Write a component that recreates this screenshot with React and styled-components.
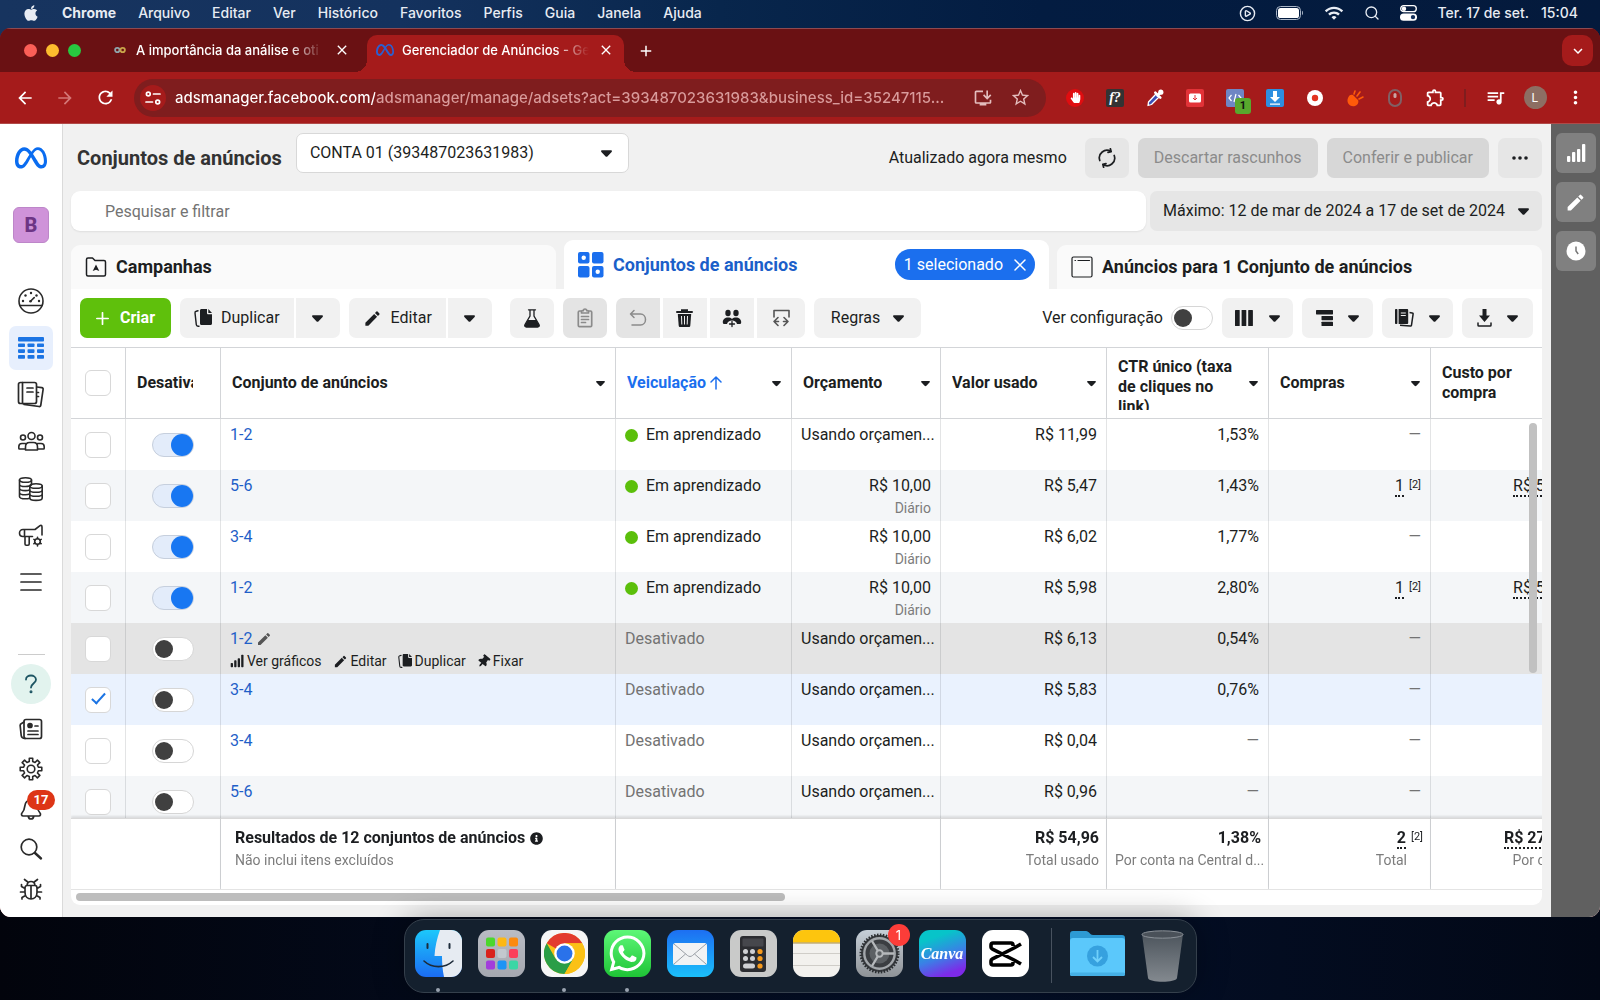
import React from "react";
import styled, { createGlobalStyle, css } from "styled-components";
import { FaApple, FaHandPaper, FaWhatsapp, FaThumbtack, FaInfoCircle } from "react-icons/fa";
import { FaMeta } from "react-icons/fa6";
import {
  MdArrowBack, MdArrowForward, MdRefresh, MdStarBorder, MdOutlineInstallDesktop,
  MdOutlineExtension, MdQueueMusic, MdMoreVert, MdClose, MdAdd, MdExpandMore, MdModeEdit, MdWifi,
} from "react-icons/md";
import { Search, CirclePlay } from "lucide-react";

const UI = 'Roboto, "Liberation Sans", sans-serif';
const SYSTEM = 'Inter, "Liberation Sans", sans-serif';
const INK = "#1c1e21";
const BLUE = "#1b74e4";
const LINE = "#d3d5d8";

const GlobalStyle = createGlobalStyle`
  *, *::before, *::after { box-sizing: border-box; }
  body { margin: 0; background: #050b1a; }
  button, input, select { font: inherit; color: inherit; margin: 0; }
  button { border: 0; padding: 0; background: none; cursor: pointer; }
  svg { display: block; flex: none; }
`;

/* ---------- desktop ---------- */
const Desktop = styled.div`
  height: 100vh;
  display: flex;
  flex-direction: column;
  overflow: hidden;
  background: linear-gradient(90deg, #17345f 0, #14325e 25%, #08264c 45%, #031c41 65%, #041a3c 100%) 0 0 / 100% 60px no-repeat,
    linear-gradient(90deg, #02040c, #04102a 60%, #020816);
`;
const MenuBar = styled.header`
  height: 28px;
  padding: 0 22px 2px;
  display: flex;
  align-items: center;
  justify-content: space-between;
  font: 500 14px/26px ${SYSTEM};
  color: #e8ecf3;
`;
const MenuGroup = styled.nav`
  display: flex;
  align-items: center;
  gap: 22px;
`;
const MenuItem = styled.button`
  font-weight: ${(p) => (p.$strong ? 700 : 500)};
`;
const StatusGroup = styled.div`
  display: flex;
  align-items: center;
  gap: 20px;
`;
const Clock = styled.time`
  display: flex;
  gap: 12px;
`;

/* ---------- browser ---------- */
const BrowserWindow = styled.div`
  flex: 1;
  min-height: 0;
  display: flex;
  flex-direction: column;
  border-radius: 11px;
  overflow: hidden;
  background: #a51b1b;
  font-family: ${SYSTEM};
  color: #fff;
`;
const TabStrip = styled.div`
  height: 44px;
  padding: 0 7px 0 24px;
  display: flex;
  align-items: center;
  background: #6a1113;
  border-top: 1px solid #8d4a50;
`;
const Lights = styled.div`
  display: flex;
  gap: 9px;
  margin-right: 23px;
`;
const Light = styled.span`
  width: 13px;
  height: 13px;
  border-radius: 50%;
  background: ${(p) => p.$color};
`;
const BrowserTab = styled.div`
  position: relative;
  width: 263px;
  height: 37px;
  align-self: flex-end;
  padding: 0 16px 7px 10px;
  display: flex;
  align-items: center;
  gap: 10px;
  font-size: 13px;
  font-weight: 500;
  ${(p) => p.$active && css`
    width: 257px;
    padding: 0 9px 7px;
    gap: 8px;
    border-radius: 10px 10px 0 0;
    background: #a51b1b;
    &::before, &::after {
      content: "";
      position: absolute;
      bottom: 0;
      width: 12px;
      height: 12px;
    }
    &::before { left: -12px; background: radial-gradient(circle at 0 0, transparent 12px, #a51b1b 12px); }
    &::after { right: -12px; background: radial-gradient(circle at 100% 0, transparent 12px, #a51b1b 12px); }
  `}
`;
const TabTitle = styled.span`
  flex: 1;
  min-width: 0;
  overflow: hidden;
  white-space: nowrap;
  mask-image: linear-gradient(90deg, #000 calc(100% - 34px), transparent);
`;
const IconButton = styled.button`
  width: ${(p) => p.$w || 18}px;
  height: ${(p) => p.$h || p.$w || 18}px;
  display: grid;
  place-items: center;
  border-radius: 10px;
  background: ${(p) => p.$bg || "none"};
  color: ${(p) => p.$fg || "#fff"};
  flex: none;
`;
const Spacer = styled.div`flex: 1;`;
const AddressRow = styled.div`
  height: 52px;
  padding: 0 5px;
  display: flex;
  align-items: center;
  border-bottom: 1px solid #b04a48;
`;
const Omnibox = styled.label`
  flex: 1;
  height: 38px;
  margin: 0 9px 0 9px;
  padding: 0 13px 0 6px;
  display: flex;
  align-items: center;
  gap: 9px;
  border-radius: 19px;
  background: #7f1d1e;
`;
const SiteInfo = styled.span`
  width: 26px;
  height: 26px;
  flex: none;
  display: grid;
  place-items: center;
  border-radius: 50%;
  background: #a51b1b;
`;
const AddressInput = styled.input`
  flex: 1;
  min-width: 0;
  border: 0;
  padding: 0;
  outline: 0;
  font-size: 15px;
  font-weight: 500;
  color: #fff;
  background: linear-gradient(90deg, #fff 200px, #d99b9b 200px);
  -webkit-background-clip: text;
  background-clip: text;
  -webkit-text-fill-color: transparent;
`;
const Extensions = styled.div`display: flex; align-items: center;`;
const BarDivider = styled.span`
  width: 2px;
  height: 18px;
  margin: 0 9px;
  background: #7f1d1e;
`;
const Avatar = styled.span`
  width: 23px;
  height: 23px;
  border-radius: 50%;
  background: #8d6e63;
  font-size: 12px;
  line-height: 23px;
  text-align: center;
`;

/* ---------- page ---------- */
const Page = styled.div`
  flex: 1;
  min-height: 0;
  display: flex;
  background: #f1f1f1;
  color: ${INK};
  font: 400 16px/20px ${UI};
`;
const SideNav = styled.nav`
  width: 63px;
  padding: 12px 0 8px;
  display: flex;
  flex-direction: column;
  align-items: center;
  background: #fff;
  border-right: 1px solid #dadada;
`;
const SideItem = styled.button`
  position: relative;
  width: 44px;
  height: ${(p) => (p.$small ? 40 : 44)}px;
  flex: none;
  margin-bottom: ${(p) => (p.$small ? 0 : 3)}px;
  display: grid;
  place-items: center;
  border-radius: 7px;
  background: ${(p) => (p.$active ? "#e7effd" : "none")};
  color: ${(p) => (p.$active ? BLUE : "#2a2a2a")};
`;
const BusinessBadge = styled.button`
  width: 36px;
  height: 36px;
  flex: none;
  margin: 24px 0 36px;
  border: 1px solid #bd86c9;
  border-radius: 6px;
  background: #cf93d9;
  color: #6d3585;
  font-size: 20px;
  font-weight: 800;
`;
const SideRule = styled.hr`
  width: 27px;
  margin: auto 0 9px;
  border: 0;
  border-top: 1px solid #ccc;
`;
const HelpButton = styled.button`
  width: 40px;
  height: 40px;
  flex: none;
  margin-bottom: 5px;
  display: grid;
  place-items: center;
  border-radius: 50%;
  background: #e2f3ee;
  color: #1d5563;
`;
const CountBadge = styled.span`
  position: absolute;
  top: 1px;
  left: 18px;
  width: 28px;
  height: 20px;
  border-radius: 10px;
  background: #dd3516;
  color: #fff;
  font-size: 13px;
  font-weight: 700;
  line-height: 20px;
  text-align: center;
`;
const Content = styled.main`
  flex: 1;
  min-width: 0;
  padding: 9px 9px 12px 8px;
  display: flex;
  flex-direction: column;
`;
const PageHeader = styled.div`
  min-height: 50px;
  display: flex;
  align-items: center;
  gap: 9px;
`;
const Title = styled.h1`
  margin: 0 5px 0 6px;
  font-size: 20px;
  line-height: 24px;
  font-weight: 700;
  color: #333;
`;
const AccountPicker = styled.label`
  width: 333px;
  height: 40px;
  align-self: flex-start;
  display: grid;
  align-items: center;
  grid-template-columns: 1fr;
  & > * { grid-area: 1 / 1; }
  & > svg { justify-self: end; margin-right: 17px; pointer-events: none; }
`;
const AccountSelect = styled.select`
  width: 100%;
  height: 40px;
  padding: 0 40px 0 13px;
  appearance: none;
  border: 1px solid #d8d8d8;
  border-radius: 7px;
  background: #fff;
`;
const Updated = styled.span`margin-right: 9px;`;
const Button = styled.button`
  height: 40px;
  min-width: 44px;
  padding: 0 ${(p) => p.$pad || 0}px;
  display: flex;
  align-items: center;
  justify-content: center;
  gap: ${(p) => p.$gap || 9}px;
  border-radius: 7px;
  white-space: nowrap;
  background: ${(p) => p.$bg || "#f1f1f1"};
  color: ${(p) => p.$fg || INK};
  font-weight: ${(p) => (p.$strong ? 700 : 400)};
`;
const SearchRow = styled.div`
  margin: 8px 0 9px;
  display: flex;
  gap: 4px;
`;
const SearchInput = styled.input`
  flex: 1;
  height: 40px;
  padding: 0 34px;
  border: 0;
  border-radius: 9px;
  background: #fff;
  box-shadow: 0 1px 2px rgba(0, 0, 0, 0.08);
  &::placeholder { color: #737373; opacity: 1; }
`;
const LevelTabs = styled.div`
  display: grid;
  grid-template-columns: repeat(3, 1fr);
  column-gap: 8px;
  align-items: end;
`;
const LevelTab = styled.div`
  height: ${(p) => (p.$active ? 49 : 44)}px;
  padding: 0 14px;
  display: flex;
  align-items: center;
  justify-content: space-between;
  border-radius: 9px 9px 0 0;
  background: ${(p) => (p.$active ? "#fff" : "#fafafa")};
  color: ${(p) => (p.$active ? "#1b5fc9" : INK)};
`;
const LevelButton = styled.button`
  display: flex;
  align-items: center;
  gap: 9px;
  font-size: 18px;
  font-weight: 700;
`;
const SelectedPill = styled.button`
  height: 31px;
  padding: 0 9px;
  display: flex;
  align-items: center;
  gap: 11px;
  border-radius: 16px;
  background: #1b6fee;
  color: #fff;
`;
const Panel = styled.section`
  flex: 1;
  min-height: 0;
  display: flex;
  flex-direction: column;
  background: #fff;
  border-radius: 0 0 9px 9px;
`;
const Toolbar = styled.div`
  height: 58px;
  padding: 0 9px;
  flex: none;
  display: flex;
  align-items: center;
  gap: 9px;
`;
const ButtonGroup = styled.div`
  display: flex;
  gap: ${(p) => p.$gap || 2}px;
  & > button:not(:first-child) { border-top-left-radius: 0; border-bottom-left-radius: 0; }
  & > button:not(:last-child) { border-top-right-radius: 0; border-bottom-right-radius: 0; }
`;
const Flask = styled(Button)`margin-left: 9px;`;
const ConfigLabel = styled.label`
  display: flex;
  align-items: center;
  gap: 8px;
`;

/* ---------- controls ---------- */
const Switch = styled.input.attrs({ type: "checkbox", role: "switch" })`
  appearance: none;
  width: 42px;
  height: 24px;
  padding: 0 2px;
  display: inline-flex;
  align-items: center;
  vertical-align: middle;
  border: 1px solid #d6d6d6;
  border-radius: 12px;
  background: #fff;
  &::before {
    content: "";
    width: 18px;
    height: 18px;
    border-radius: 50%;
    background: #404040;
  }
  &:checked {
    padding: 0;
    justify-content: flex-end;
    background: #e3ecfa;
    border-color: #c6cfdd;
  }
  &:checked::before {
    width: 22px;
    height: 22px;
    background: #1877f2;
  }
`;
const Tick = styled.input.attrs({ type: "checkbox" })`
  appearance: none;
  width: 26px;
  height: 26px;
  display: inline-grid;
  place-items: center;
  vertical-align: middle;
  border: 1px solid #d8d8d8;
  border-radius: 6px;
  background: #fff;
  &:checked::before {
    content: "";
    width: 7px;
    height: 14px;
    margin-bottom: 5px;
    border: solid ${BLUE};
    border-width: 0 2px 2px 0;
    transform: rotate(42deg);
  }
`;

/* ---------- table ---------- */
const TableArea = styled.div`
  position: relative;
  flex: 1;
  min-height: 0;
  overflow: hidden;
  border-top: 1px solid ${LINE};
  border-bottom: 1px solid #e4e4e4;
`;
const Table = styled.table`
  width: 1522px;
  table-layout: fixed;
  border-collapse: separate;
  border-spacing: 0;
`;
const HeadCell = styled.th`
  position: sticky;
  top: 0;
  z-index: 1;
  height: 71px;
  padding: ${(p) => (p.$center ? "0" : "0 10px 0 11px")};
  text-align: ${(p) => (p.$center ? "center" : "left")};
  border-right: 1px solid ${LINE};
  border-bottom: 1px solid ${LINE};
  background: #fff;
`;
const HeadInner = styled.div`
  display: flex;
  align-items: center;
  justify-content: space-between;
`;
const HeadText = styled.button`
  max-width: ${(p) => p.$max || "none"};
  max-height: 53px;
  overflow: hidden;
  display: flex;
  align-items: ${(p) => (p.$sorted ? "center" : "flex-start")};
  gap: 3px;
  text-align: left;
  font-weight: 700;
  white-space: ${(p) => (p.$wrap ? "normal" : "nowrap")};
  color: ${(p) => (p.$sorted ? "#1b6fee" : "inherit")};
`;
const Row = styled.tr`
  background: ${(p) => ({ plain: "#fff", alt: "#f4f6f8", hover: "#e4e4e4", picked: "#eaf2fe" })[p.$tone]};
`;
const Cell = styled.td`
  height: 51px;
  padding: ${(p) => (p.$middle ? "0" : "6px 9px 0")};
  vertical-align: ${(p) => (p.$middle ? "middle" : "top")};
  text-align: ${(p) => (p.$middle ? "center" : p.$right ? "right" : "left")};
  border-right: 1px solid rgba(60, 64, 70, 0.14);
  white-space: nowrap;
`;
const FootCell = styled.td`
  position: sticky;
  bottom: 0;
  height: 71px;
  padding: 9px 7px 0 ${(p) => (p.$name ? 14 : 8)}px;
  vertical-align: top;
  text-align: ${(p) => (p.$right ? "right" : "left")};
  border-top: 1px solid #d9d9d9;
  border-right: 1px solid ${LINE};
  background: #fff;
  box-shadow: 0 -2px 2px rgba(0, 0, 0, 0.1);
  white-space: nowrap;
  font-weight: 700;
`;
const NameLink = styled.a`
  color: #1f5fc8;
  text-decoration: none;
`;
const NameLine = styled.div`display: flex; align-items: center; gap: 4px; color: #555;`;
const RowActions = styled.div`
  margin-top: 2px;
  display: flex;
  gap: 11px;
  font-size: 14px;
  line-height: 20px;
`;
const RowAction = styled.button`display: flex; align-items: center; gap: 3px;`;
const TiltedPin = styled(FaThumbtack)`transform: rotate(40deg);`;
const Delivery = styled.span`
  display: flex;
  align-items: center;
  gap: 8px;
  color: ${(p) => (p.$off ? "#737373" : "inherit")};
`;
const Dot = styled.span`
  width: 13px;
  height: 13px;
  border-radius: 50%;
  background: #5bbf0b;
`;
const Sub = styled.div`
  margin-top: 3px;
  font-size: 14px;
  line-height: 18px;
  font-weight: 400;
  color: #7c7c7c;
  padding-right: ${(p) => p.$inset || 0}px;
`;
const Dash = styled.span`color: #737373;`;
const Dotted = styled.span`border-bottom: 2px dotted currentColor;`;
const Note = styled.sup`
  margin-left: 5px;
  font-size: 11px;
  line-height: 10px;
  font-weight: 400;
  vertical-align: 3px;
`;
const FootTitle = styled.div`display: flex; align-items: center; gap: 5px;`;
const VerticalThumb = styled.div`
  position: absolute;
  top: 75px;
  right: 5px;
  z-index: 2;
  width: 8px;
  height: 250px;
  border-radius: 4px;
  background: #c1c1c1;
`;
const ScrollTrack = styled.div`
  height: 15px;
  flex: none;
  padding: 3px 5px;
`;
const HorizontalThumb = styled.div`
  width: 48.5%;
  height: 8px;
  border-radius: 4px;
  background: #bdbdbd;
`;

/* ---------- right rail ---------- */
const Rail = styled.aside`
  width: 49px;
  padding-top: 9px;
  display: flex;
  flex-direction: column;
  align-items: center;
  gap: 9px;
  background: #606060;
`;
const RailButton = styled.button`
  width: 40px;
  height: 40px;
  display: grid;
  place-items: center;
  border-radius: 6px;
  background: #808080;
  color: #fff;
`;

/* ---------- dock ---------- */
const DockArea = styled.footer`
  position: relative;
  height: 83px;
  padding-top: 2px;
  flex: none;
  display: flex;
  justify-content: center;
  align-items: flex-start;
`;
const DockShelf = styled.div`
  height: 74px;
  padding: 10px 12px 0 10px;
  display: flex;
  align-items: flex-start;
  gap: 16px;
  border: 1px solid #35404c;
  border-radius: 20px;
  background: #14202e;
  box-shadow: 0 0 32px rgba(0, 0, 0, 0.32);
`;
const DockApp = styled.button`
  position: relative;
  width: 47px;
  height: 63px;
  font-family: ${SYSTEM};
  &::after {
    content: "";
    position: absolute;
    left: 21px;
    bottom: 1px;
    width: 4px;
    height: 4px;
    border-radius: 50%;
    background: ${(p) => (p.$running ? "#9aa3b0" : "transparent")};
  }
`;
const DockTile = styled.span`
  width: 47px;
  height: 47px;
  margin-bottom: 16px;
  display: grid;
  place-items: center;
  overflow: hidden;
  border-radius: 11px;
  background: ${(p) => p.$bg};
  color: #fff;
`;
const DockBadge = styled.span`
  position: absolute;
  top: -6px;
  right: -7px;
  width: 22px;
  height: 22px;
  border-radius: 50%;
  background: #fc3d39;
  color: #fff;
  font-size: 13px;
  line-height: 22px;
`;
const CanvaWord = styled.span`
  font: italic 700 16px/20px "Liberation Serif", serif;
`;
const DockRule = styled.span`
  width: 1px;
  height: 55px;
  margin: -2px 2px 0 6px;
  background: #48525f;
`;

/* ---------- drawings ---------- */
const Caret = ({ w = 11 }) => (
  <svg width={w} height={w} viewBox="0 -2.500 12 12"><path d="M1.2 0h9.6c1 0 1.5 1 .8 1.8L7.200 6.400c-.7.8-1.700.8-2.400 0L.4 1.800C-.3 1 .2 0 1.2 0z" fill="currentColor" /></svg>
);
const Stroke = ({ size = 26, sw = 1.6, children, box = 26 }) => (
  <svg width={size} height={size} viewBox={`0 0 ${box} ${box}`} fill="none" stroke="currentColor" strokeWidth={sw} strokeLinecap="round" strokeLinejoin="round">{children}</svg>
);
const PlusIcon = () => (<Stroke size={13} box={13} sw={1.7}><path d="M6.500.8v11.400M.8 6.500h11.400" /></Stroke>);
const GaugeIcon = () => (
  <Stroke><circle cx="13" cy="13" r="12" /><path d="M2 17.5h22M13 12.8l3.2-3.2" />
    <g fill="currentColor" stroke="none"><circle cx="5" cy="13" r="1.2" /><circle cx="7.5" cy="7.5" r="1.2" /><circle cx="13" cy="5" r="1.2" /><circle cx="18.5" cy="7.5" r="1.2" /><circle cx="21" cy="13" r="1.2" /><circle cx="12.5" cy="13.3" r="1.3" /></g></Stroke>
);
const GridIcon = () => (
  <svg width="26" height="22" viewBox="0 0 26 22" fill="currentColor">
    <rect width="26" height="4.5" rx="1" />
    {[6.5, 12.3, 18.1].map((y) => [0, 9.5, 19].map((x) => <rect key={x + "-" + y} x={x} y={y} width="7" height="3.6" rx=".8" />))}
  </svg>
);
const PagesIcon = () => (
  <Stroke size={28} box={28} sw={1.7}><rect x="1.5" y="1.5" width="18" height="21" rx="2" /><path d="M5.5 1.5v21M10 7h6M10 11h6M19.8 6l5 .7c1 .2 1.500.8 1.300 1.800l-2.300 15.700c-.1 1-.8 1.500-1.800 1.300L7 23.300M20 11.500h1.500M20 15.500h1.500" /></Stroke>
);
const PeopleIcon = () => (
  <Stroke size={27} box={27} sw={1.6}><circle cx="13.5" cy="7" r="3.5" /><circle cx="5" cy="8.5" r="2.5" /><circle cx="22" cy="8.5" r="2.5" /><path d="M7.5 21v-3c0-3 2-4.500 4-4.500h4c2 0 4 1.500 4 4.500v3zM7.500 20H1.500c-.5 0-.7-.3-.7-.8v-1.500c0-2 1.400-3.200 3.200-3.200h3.500M19.500 20h6c.5 0 .7-.3.7-.8v-1.500c0-2-1.400-3.200-3.200-3.200h-3.500" /></Stroke>
);
const CoinsIcon = () => (
  <Stroke><ellipse cx="7.5" cy="4" rx="6" ry="2.3" /><path d="M1.500 4v16.500c0 1.300 2.700 2.300 6 2.300 1.500 0 3-.2 4-.6M13.500 4v4M1.500 8.200c0 1.300 2.700 2.300 6 2.300s5-.6 6-1.600M1.500 12.300c0 1.300 2.700 2.300 6 2.300 1.500 0 3-.2 4-.6M1.500 16.400c0 1.300 2.700 2.300 6 2.300 1.500 0 3-.2 4-.6" /><ellipse cx="18" cy="10" rx="6.2" ry="2.3" /><path d="M11.800 10v12c0 1.300 2.800 2.400 6.200 2.400s6.200-1.100 6.200-2.400V10M11.800 14c0 1.300 2.800 2.300 6.200 2.300s6.200-1 6.200-2.300M11.800 18c0 1.300 2.800 2.300 6.200 2.300s6.200-1 6.200-2.300" /></Stroke>
);
const MegaphoneIcon = () => (
  <Stroke><path d="M24 12V4c0-1.500-1-2-2-1.300L17 6.500H5C3 6.500 1.500 8 1.500 10s1.500 3.500 3.500 3.500h9.500M6.500 6.500v7M7 13.500v7.500c0 .8.4 1.200 1.200 1.200H10c.8 0 1.200-.4 1.200-1.200v-7.500" /><circle cx="19.500" cy="18.500" r="2.800" /><path d="M19.500 14.300v1.200M19.500 21.500v1.400M15.900 16.400l1 .6M22 20l1.200.7M15.900 20.700l1.100-.7M22 17l1.200-.6" /></Stroke>
);
const MenuIcon = () => (<Stroke size={22} box={22} sw={1.7}><path d="M1 2h20M1 10h20M1 18h20" /></Stroke>);
const QuestionIcon = () => (<Stroke size={20} box={20} sw={1.8}><path d="M5 5.500C5 3 7.500 1.500 10 1.500s5 1.700 5 4.300c0 3.200-5 3.700-5 7.700" /><circle cx="10" cy="17.800" r=".6" fill="currentColor" /></Stroke>);
const NewsIcon = () => (
  <Stroke size={24} box={24} sw={1.7}><rect x="5" y="2.5" width="17.5" height="19" rx="2" /><path d="M5 5L2.500 6.500C1.500 7 1 8 1.200 9l1 9.500c.2 1.500 1.500 3 3.800 3M9 14h10M9 17.500h10M16 9h3" /><circle cx="11" cy="8.500" r="2" fill="currentColor" /></Stroke>
);
const gearPath = () => {
  const pts = [];
  for (let i = 0; i < 8; i += 1) {
    [[-13, 7.6], [-9, 10.9], [9, 10.9], [13, 7.6]].forEach(([d, r]) => {
      const a = ((i * 45 + d - 90) * Math.PI) / 180;
      pts.push(`${(12 + r * Math.cos(a)).toFixed(2)} ${(12 + r * Math.sin(a)).toFixed(2)}`);
    });
  }
  return `M${pts.join("L")}Z`;
};
const GearIcon = () => (<Stroke size={24} box={24} sw={1.6}><path d={gearPath()} /><circle cx="12" cy="12" r="3.800" /></Stroke>);
const BellIcon = () => (<Stroke size={24} box={24} sw={1.7}><path d="M12 3c-3.800 0-5.800 2.600-6.200 6.200C5.400 13 4.500 14.500 3 16c-1 1.200-.5 3 1.200 3h15.600c1.700 0 2.200-1.800 1.200-3-1.500-1.500-2.400-3-2.800-6.800C17.800 5.600 15.800 3 12 3zM9.300 19.500c.3 1.500 1.300 2.500 2.700 2.500s2.400-1 2.700-2.500" /></Stroke>);
const SearchIcon = () => (<Stroke size={24} box={24} sw={1.7}><circle cx="10" cy="10" r="7.800" /><path d="M16 16l6 5.500" strokeWidth="2.4" /></Stroke>);
const BugIcon = () => (<Stroke size={24} box={24} sw={1.7}><path d="M6 11c0-1.500.8-2.500 2-2.500h8c1.200 0 2 1 2 2.500v4.500c0 3.800-2.500 6.500-6 6.500s-6-2.700-6-6.500zM8 8.300C8.300 6 9.800 4.500 12 4.500s3.700 1.500 4 3.800M12 8.500V22M8.800 5L5.500 2.500M15.200 5l3.300-2.500M6 11.500L2.500 9.500V7.500M6 15H1.500M6.500 18.500l-3.500 2V22M18 11.500l3.500-2V7.500M18 15h4.500M17.500 18.500l3.500 2V22" /></Stroke>);
const BarsIcon = ({ size = 20 }) => (
  <svg width={size} height={size} viewBox="0 0 20 20" fill="currentColor"><rect x="1" y="13" width="3.3" height="6" rx="1" /><rect x="6" y="9" width="3.3" height="10" rx="1" /><rect x="11" y="6" width="3.3" height="13" rx="1" /><rect x="16" y="1" width="3.3" height="18" rx="1" /></svg>
);
const ClockIcon = () => (
  <svg width="20" height="20" viewBox="0 0 20 20"><circle cx="10" cy="10" r="9.500" fill="#fff" /><path d="M10 5.500V10l2.200 3" stroke="#777" strokeWidth="1.5" fill="none" /></svg>
);
const CopyIcon = ({ size = 18 }) => (
  <svg width={size} height={size} viewBox="0 0 18 18" fill="currentColor"><path d="M7.500 0H13v4c0 .8.5 1.300 1.300 1.300H18v9.200c0 .9-.6 1.500-1.500 1.500h-9c-.9 0-1.500-.6-1.500-1.500v-13C6 .6 6.600 0 7.500 0z" /><path d="M14.300 0L18 3.900h-3.700z" /><path d="M4 1.800L2.300 2.200C1.400 2.400.9 3 1 3.900l1.300 11.800c.1.9.8 1.500 1.700 1.500h1" fill="none" stroke="currentColor" strokeWidth="1.4" strokeLinecap="round" /></svg>
);
const FlaskIcon = () => (
  <svg width="18" height="19" viewBox="0 0 18 19"><path d="M5.500.8h7M7 1v6L2 15.500c-.7 1.300 0 2.500 1.400 2.500h11.200c1.400 0 2.100-1.200 1.400-2.500L11 7V1" fill="none" stroke="currentColor" strokeWidth="1.3" strokeLinecap="round" /><path d="M4.800 11h8.400l3 5c.5 1-.2 2-1.400 2H3.200c-1.200 0-1.900-1-1.400-2z" fill="currentColor" /></svg>
);
const ClipboardIcon = () => (<Stroke size={20} box={20} sw={1.7}><path d="M6.500 3H4.500c-.8 0-1.200.4-1.200 1.200v13.300c0 .8.4 1.200 1.200 1.200h11c.8 0 1.200-.4 1.200-1.200V4.200c0-.8-.4-1.200-1.200-1.200h-2M6.500 5V3.500c0-.6.3-.8.8-.8h.9C8.500 1.500 9 1 10 1s1.500.5 1.800 1.700h.9c.5 0 .8.2.8.8V5zM6.500 8.500h7M6.500 11.500h7M6.500 14.500h4" /></Stroke>);
const UndoIcon = () => (<Stroke size={18} box={18} sw={1.5}><path d="M5 1.500L1.500 5 5 8.500M1.500 5h10C14.500 5 16.500 7.500 16.500 10.500S14.500 16 11.500 16H3" /></Stroke>);
const TrashIcon = () => (
  <svg width="17" height="18" viewBox="0 0 17 18"><path d="M1 3h15M6 2.500V1.200h5v1.300" fill="none" stroke="currentColor" strokeWidth="2" strokeLinecap="round" /><path d="M1.800 5h13.400l-.9 11.500c-.1 1-.6 1.500-1.500 1.500H4.200c-.9 0-1.400-.5-1.500-1.500z" fill="currentColor" /><path d="M5.500 7l.3 8.500M8.500 7v8.500M11.500 7l-.3 8.500" stroke="#f1f1f1" strokeWidth="1" /></svg>
);
const AudienceIcon = () => (
  <svg width="20" height="19" viewBox="0 0 20 19" fill="currentColor"><ellipse cx="6" cy="4" rx="2.7" ry="3.3" /><ellipse cx="14" cy="4" rx="2.7" ry="3.3" /><path d="M.8 13C.8 10.500 3 8.500 6 8.500c1.700 0 3 .5 4 1.400 1-.9 2.300-1.400 4-1.400 3 0 5.200 2 5.200 4.500 0 1.500-.5 2-1.500 2H15c-.5-2-2.500-3.500-5-3.500S5.500 13 5 15H2.300c-1 0-1.500-.5-1.500-2z" /><path d="M10 12.500v5M7.500 15h5" stroke="currentColor" strokeWidth="1.3" strokeLinecap="round" /></svg>
);
const CompareIcon = () => (<Stroke size={20} box={20} sw={1.6}><path d="M3 9V2.500h15V9M7 9.500l-4 4 4 4M13 9.500l4 4-4 4M3 13.500h4.500M12.500 13.500H17" /></Stroke>);
const ColumnsIcon = () => (<svg width="18" height="16" viewBox="0 0 18 16" fill="currentColor"><rect width="4.7" height="16" rx=".6" /><rect x="6.6" width="4.7" height="16" rx=".6" /><rect x="13.2" width="4.7" height="16" rx=".6" /></svg>);
const BreakdownIcon = () => (<svg width="17" height="16" viewBox="0 0 17 16" fill="currentColor"><rect width="17" height="4.4" rx=".6" /><rect x="5.5" y="5.9" width="11.5" height="4.3" rx=".6" /><rect x="5.5" y="11.7" width="11.5" height="4.3" rx=".6" /></svg>);
const ReportIcon = () => (
  <svg width="19" height="18" viewBox="0 0 19 18" fill="currentColor"><rect width="2.4" height="15" rx=".8" /><path d="M3.600 0H12c.8 0 1.200.4 1.200 1.200v12.600c0 .8-.4 1.200-1.200 1.200H3.600z" /><path d="M14.500 3.500l2.700.4c.7.1 1 .5.9 1.200l-1.600 11c-.1.8-.6 1.100-1.300 1L5 16.300" fill="none" stroke="currentColor" strokeWidth="1.5" /><path d="M5.800 4h5M5.800 6.500h5" stroke="#f1f1f1" strokeWidth="1.1" /></svg>
);
const ExportIcon = () => (<svg width="15" height="18" viewBox="0 0 15 18"><path d="M5.500 0h4v6.500H13L7.500 13 2 6.500h3.500z" fill="currentColor" /><path d="M1 14v2.200c0 .6.3.9.9.9h11.200c.6 0 .9-.3.9-.9V14" fill="none" stroke="currentColor" strokeWidth="1.5" strokeLinecap="round" /></svg>);
const SyncIcon = () => (<Stroke size={20} box={20} sw={1.7}><path d="M2.800 12.500A7.600 7.600 0 0 1 14 3.500M17.200 7.500A7.600 7.600 0 0 1 6 16.500M11 4.300l3.200-.6-.8-3M9 15.700l-3.200.6.8 3" /></Stroke>);
const FolderIcon = () => (<Stroke size={22} box={22} sw={1.5}><path d="M1.500 18.500v-15c0-1 .5-1.500 1.500-1.500h4.500L10 4.500h9c1 0 1.500.5 1.500 1.500v12.500c0 1-.5 1.500-1.500 1.500H3c-1 0-1.500-.5-1.500-1.500z" /><path d="M11 8.500l3.300 6.500L11 13.800 7.700 15z" fill="currentColor" stroke="none" /></Stroke>);
const AdIcon = () => (<Stroke size={22} box={22} sw={1.2}><rect x="1" y="1" width="20" height="20" rx="1.5" /><path d="M7 4.500h11.500M4 4.500h.5" /></Stroke>);
const SetsIcon = () => (
  <svg width="26" height="26" viewBox="0 0 26 26"><g fill="#1b6fee"><rect width="11.5" height="11.5" rx="2" /><rect x="14" width="11.5" height="11.5" rx="2" /><rect y="14" width="11.5" height="11.5" rx="2" /><rect x="14" y="14" width="11.5" height="11.5" rx="2" /></g><circle cx="5.700" cy="5.700" r="2.2" fill="#fff" /><circle cx="19.700" cy="19.700" r="2.2" fill="#fff" /></svg>
);
const Cross = () => (<Stroke size={12} box={12} sw={1.5}><path d="M1 1l10 10M11 1L1 11" /></Stroke>);
const TuneIcon = () => (<Stroke size={16} box={16} sw={1.7}><circle cx="3.300" cy="4" r="1.9" /><path d="M8.500 4H15M1 12h6.500" /><circle cx="12.700" cy="12" r="1.9" /></Stroke>);
const BatteryIcon = () => (<svg width="28" height="14" viewBox="0 0 28 14"><rect x=".5" y=".5" width="24" height="13" rx="4" fill="none" stroke="#a9b5c6" /><rect x="2" y="2" width="21" height="10" rx="2.6" fill="#fff" /><path d="M26 4.800c1.300.4 1.300 4 0 4.400z" fill="#a9b5c6" /></svg>);
const ControlIcon = () => (<svg width="17" height="16" viewBox="0 0 17 16"><rect x=".7" y=".7" width="15.6" height="6" rx="3" fill="none" stroke="#fff" strokeWidth="1.3" /><circle cx="4" cy="3.700" r="2.2" fill="#fff" /><rect y="8.5" width="17" height="7.3" rx="3.6" fill="#fff" /><circle cx="13" cy="12.100" r="2.2" fill="#14305a" /></svg>);
const InfinityIcon = () => (<svg width="12" height="8" viewBox="0 0 12 8" fill="none" strokeWidth="1.8"><circle cx="3.300" cy="4" r="2.2" stroke="#8fa6ad" /><circle cx="8.700" cy="4" r="2.2" stroke="#c9a54a" /></svg>);
const DropperIcon = () => (
  <svg width="18" height="18" viewBox="0 0 18 18"><path d="M10 5l3 3-7.500 7.500L2 16.500l.5-3.500z" fill="#3c4fb5" stroke="#fff" strokeWidth="1.300" strokeLinejoin="round" /><path d="M9.300 3.700l5 5M11.500 6.500l3.500-3.500" stroke="#fff" strokeWidth="2.600" strokeLinecap="round" /><circle cx="14.800" cy="3.200" r="2.600" fill="#fff" /></svg>
);

const SquareExt = ({ bg, children }) => (<svg width="18" height="18" viewBox="0 0 18 18"><rect width="18" height="18" rx="2" fill={bg} />{children}</svg>);
const ExtBadge = styled.span`
  position: absolute;
  left: 20px;
  top: 20px;
  width: 16px;
  height: 16px;
  border-radius: 3px;
  background: #58a82d;
  color: #111;
  font: 700 11px/16px ${UI};
`;
const ExtButton = styled(IconButton)`position: relative;`;
const HandDisc = styled.span`
  width: 18px;
  height: 18px;
  display: grid;
  place-items: center;
  border-radius: 50%;
  background: #e00d10;
`;
const FnTile = styled.span`
  width: 18px;
  height: 18px;
  border-radius: 2px;
  background: #333;
  font: italic 700 14px/17px "Liberation Serif", serif;
`;

const FinderArt = () => (
  <svg width="47" height="47" viewBox="0 0 47 47">
    <defs><linearGradient id="fa" x2="0" y2="1"><stop stopColor="#1cc8fb" /><stop offset="1" stopColor="#1b6cf2" /></linearGradient></defs>
    <rect width="47" height="47" fill="url(#fa)" /><path d="M25 0c-3 8-5 17-5.500 26H27c0 7 .5 14 2 21h18V0z" fill="#e6ebf2" />
    <path d="M12.500 14v4M34.500 14v4" stroke="#1d2b3a" strokeWidth="2" strokeLinecap="round" /><path d="M9 31c8 7.500 21 7.500 29 0" fill="none" stroke="#1d2b3a" strokeWidth="1.6" strokeLinecap="round" />
  </svg>
);
const LaunchArt = () => {
  const c = ["#4bd72c", "#fdb813", "#fb8a0e", "#d9221c", "#c3c8ce", "#fb3e5a", "#a23ddb", "#1d94f5", "#3ad6a5"];
  return <svg width="47" height="47" viewBox="0 0 47 47">{c.map((f, i) => <rect key={f} x={8 + (i % 3) * 11.5} y={7.5 + Math.floor(i / 3) * 11.5} width="9" height="9" rx="2" fill={f} />)}</svg>;
};
const ChromeArt = () => (
  <svg width="41" height="41" viewBox="0 0 48 48">
    <circle cx="24" cy="24" r="24" fill="#fbc116" /><path d="M24 24L3.200 12A24 24 0 0 1 44.800 12H24z" fill="#e33b2e" /><path d="M24 24l10.400 6L24 48A24 24 0 0 1 3.200 12l10.400 18z" fill="#2b9e47" /><path d="M24 12h20.800A24 24 0 0 1 24 48l10.400-18z" fill="#fbc116" />
    <circle cx="24" cy="24" r="12" fill="#fff" /><circle cx="24" cy="24" r="9.300" fill="#2a72ea" />
  </svg>
);
const MailArt = () => (
  <svg width="34" height="22" viewBox="0 0 34 22"><rect width="34" height="22" rx="2.5" fill="#f1f2f4" /><path d="M1 1l13.500 11.500c1.500 1.300 3.500 1.300 5 0L33 1M1 21l11.500-10M33 21L21.500 11" fill="none" stroke="#9a9fa6" strokeWidth="1" /></svg>
);
const CalcArt = () => (
  <svg width="26" height="36" viewBox="0 0 26 36"><rect width="26" height="36" rx="3" fill="#2c2d31" /><rect x="2.5" y="2.5" width="21" height="8" rx="1" fill="#46474c" />
    {[15.5, 22.5].map((y) => [5.5, 12.5].map((x) => <circle key={x + "-" + y} cx={x} cy={y} r="2.5" fill="#cfd0d3" />))}
    {[15.5, 22.5, 30].map((y) => <circle key={y} cx="20" cy={y} r="2.6" fill="#f79a1c" />)}<rect x="3" y="27.5" width="12" height="5" rx="2.5" fill="#cfd0d3" /></svg>
);
const NotesArt = () => (<svg width="47" height="47" viewBox="0 0 47 47"><rect width="47" height="47" fill="#f2f1ee" /><rect width="47" height="12.5" fill="#fdc50e" /><path d="M0 13h47" stroke="#a98b3a" strokeWidth="1" /><path d="M0 23.500h47M0 35.500h47" stroke="#cfcdc8" /></svg>);
const SettingsArt = () => (
  <svg width="41" height="41" viewBox="0 0 41 41" fill="none"><circle cx="20.500" cy="20.500" r="18.500" fill="#3b3e42" stroke="#2b2e31" strokeWidth="3" strokeDasharray="1.5 1.4" /><circle cx="20.500" cy="20.500" r="15.200" stroke="#a3a7ab" strokeWidth="2.4" /><circle cx="20.500" cy="20.500" r="10" fill="#5c6064" /><circle cx="20.500" cy="20.500" r="3.200" stroke="#b5b8bb" strokeWidth="2" /><path d="M23.500 20.500H35M19 23l-6 10M19 18L13 8" stroke="#b5b8bb" strokeWidth="2.4" /></svg>
);
const CapArt = () => (
  <svg width="33" height="26" viewBox="0 0 33 26" fill="none" stroke="#000" strokeWidth="3.6"><path d="M32 3l-6 3.500L3.500 17.800c-1 .5-1.500 1-1.500 2V22c0 1.200.8 2 2 2h18c1.200 0 2-.8 2-2v-1M32 23l-6-3.500L3.500 8.200C2.500 7.700 2 7.200 2 6.200V4c0-1.200.8-2 2-2h18c1.200 0 2 .8 2 2v1" /></svg>
);
const DownloadsArt = () => (
  <svg width="55" height="47" viewBox="0 0 55 47"><path d="M0 43V4c0-2 1-3 3-3h13c3 0 4 4 7 4h29c2 0 3 1 3 3v35z" fill="#2d9ad3" /><rect y="8" width="55" height="38" rx="3" fill="#5bc8fb" /><rect y="42.5" width="55" height="3.5" rx="1.5" fill="#45b0e6" /><circle cx="27.500" cy="26" r="10.500" fill="#36a1df" /><path d="M27.500 20v11M23 27l4.500 4.500L32 27" fill="none" stroke="#6fd0fb" strokeWidth="1.8" /></svg>
);
const TrashArt = () => (
  <svg width="43" height="53" viewBox="0 0 43 53"><defs><linearGradient id="tr" x2="0" y2="1"><stop stopColor="#4d555d" /><stop offset="1" stopColor="#83898f" /></linearGradient></defs><path d="M1 4l6 44c1 5 28 5 29 0l6-44z" fill="url(#tr)" /><ellipse cx="21.500" cy="4.500" rx="20.500" ry="3.700" fill="#4a5159" stroke="#8b9198" strokeWidth="1" /></svg>
);

/* ---------- data ---------- */
const MENUS = ["Arquivo", "Editar", "Ver", "Histórico", "Favoritos", "Perfis", "Guia", "Janela", "Ajuda"];
const WIDTHS = [55, 95, 395, 176, 149, 166, 162, 162, 162];
const BUDGET = "Usando orçamen...";
const ROWS = [
  { name: "1-2", on: true, spent: "R$ 11,99", ctr: "1,53%", tone: "plain" },
  { name: "5-6", on: true, daily: true, spent: "R$ 5,47", ctr: "1,43%", buys: "1", cost: "R$ 5,47", tone: "alt" },
  { name: "3-4", on: true, daily: true, spent: "R$ 6,02", ctr: "1,77%", tone: "plain" },
  { name: "1-2", on: true, daily: true, spent: "R$ 5,98", ctr: "2,80%", buys: "1", cost: "R$ 5,98", tone: "alt" },
  { name: "1-2", spent: "R$ 6,13", ctr: "0,54%", tone: "hover" },
  { name: "3-4", spent: "R$ 5,83", ctr: "0,76%", tone: "picked" },
  { name: "3-4", spent: "R$ 0,04", tone: "plain" },
  { name: "5-6", spent: "R$ 0,96", tone: "alt" },
];

const Header = ({ label, max, sorted }) => (
  <HeadCell scope="col">
    <HeadInner>
      <HeadText $max={max} $wrap={!!max} $sorted={sorted}>{label}{sorted && <Stroke size={14} box={14} sw={1.5}><path d="M7 13V1M2 6l5-5 5 5" /></Stroke>}</HeadText>
      <Caret w={9} />
    </HeadInner>
  </HeadCell>
);
const Noted = ({ children }) => (<><Dotted>{children}</Dotted><Note>[2]</Note></>);

const AdSetRow = ({ row, index }) => (
  <Row $tone={row.tone}>
    <Cell $middle><Tick aria-label={`Selecionar ${row.name}, linha ${index + 1}`} defaultChecked={row.tone === "picked"} /></Cell>
    <Cell $middle><Switch aria-label={`Ativar ${row.name}, linha ${index + 1}`} defaultChecked={!!row.on} /></Cell>
    <Cell>
      <NameLine><NameLink href="#conjunto">{row.name}</NameLink>{row.tone === "hover" && <MdModeEdit size={16} />}</NameLine>
      {row.tone === "hover" && (
        <RowActions>
          <RowAction><BarsIcon size={14} />Ver gráficos</RowAction>
          <RowAction><MdModeEdit size={15} />Editar</RowAction>
          <RowAction><CopyIcon size={14} />Duplicar</RowAction>
          <RowAction><TiltedPin size={13} />Fixar</RowAction>
        </RowActions>
      )}
    </Cell>
    <Cell>{row.on ? <Delivery><Dot />Em aprendizado</Delivery> : <Delivery $off>Desativado</Delivery>}</Cell>
    <Cell $right={row.daily}>{row.daily ? <>R$ 10,00<Sub>Diário</Sub></> : BUDGET}</Cell>
    <Cell $right>{row.spent}</Cell>
    <Cell $right>{row.ctr || <Dash>—</Dash>}</Cell>
    <Cell $right>{row.buys ? <Noted>{row.buys}</Noted> : <Dash>—</Dash>}</Cell>
    <Cell $right>{row.cost && <Noted>{row.cost}</Noted>}</Cell>
  </Row>
);

export default function App() {
  return (
    <>
      <GlobalStyle />
      <Desktop>
        <MenuBar>
          <MenuGroup>
            <FaApple size={18} />
            <MenuItem $strong>Chrome</MenuItem>
            {MENUS.map((m) => <MenuItem key={m}>{m}</MenuItem>)}
          </MenuGroup>
          <StatusGroup>
            <CirclePlay size={17} /><BatteryIcon /><MdWifi size={20} /><Search size={16} /><ControlIcon />
            <Clock><span>Ter. 17 de set.</span><span>15:04</span></Clock>
          </StatusGroup>
        </MenuBar>

        <BrowserWindow>
          <TabStrip>
            <Lights><Light $color="#fb5f57" /><Light $color="#fdbc2e" /><Light $color="#28c840" /></Lights>
            <BrowserTab><InfinityIcon /><TabTitle>A importância da análise e oti</TabTitle><IconButton aria-label="Fechar guia"><MdClose size={16} /></IconButton></BrowserTab>
            <BrowserTab $active><FaMeta size={18} color="#2c5fd0" /><TabTitle>Gerenciador de Anúncios - Ge</TabTitle><IconButton aria-label="Fechar guia"><MdClose size={16} /></IconButton></BrowserTab>
            <IconButton aria-label="Nova guia" $w={44} $h={30}><MdAdd size={18} /></IconButton>
            <Spacer />
            <IconButton aria-label="Pesquisar guias" $w={31} $bg="#a51b1b"><MdExpandMore size={18} /></IconButton>
          </TabStrip>
          <AddressRow>
            <IconButton aria-label="Voltar" $w={40}><MdArrowBack size={20} /></IconButton>
            <IconButton aria-label="Avançar" $w={40} $fg="#d47676"><MdArrowForward size={20} /></IconButton>
            <IconButton aria-label="Recarregar" $w={40}><MdRefresh size={21} /></IconButton>
            <Omnibox>
              <SiteInfo><TuneIcon /></SiteInfo>
              <AddressInput aria-label="Endereço" defaultValue="adsmanager.facebook.com/adsmanager/manage/adsets?act=393487023631983&business_id=35247115..." />
              <IconButton aria-label="Instalar" $w={30} $fg="#e3bdbd"><MdOutlineInstallDesktop size={20} /></IconButton>
              <IconButton aria-label="Favoritar" $w={26} $fg="#e3bdbd"><MdStarBorder size={21} /></IconButton>
            </Omnibox>
            <Extensions>
              <ExtButton aria-label="Bloqueador" $w={40}><HandDisc><FaHandPaper size={11} /></HandDisc></ExtButton>
              <ExtButton aria-label="Fontes" $w={40}><FnTile>f?</FnTile></ExtButton>
              <ExtButton aria-label="Conta-gotas" $w={40}><DropperIcon /></ExtButton>
              <ExtButton aria-label="Vídeo" $w={40}><SquareExt bg="#e23338"><rect x="3" y="4.5" width="12" height="9" rx="1.5" fill="#fff" /><path d="M9 6v5M7 9l2 2 2-2" stroke="#e23338" fill="none" /></SquareExt></ExtButton>
              <ExtButton aria-label="Código" $w={40}><SquareExt bg="#6f86c4"><path d="M5.500 6L3 9l2.500 3M12.500 6L15 9l-2.500 3M10 5l-2 8" stroke="#fff" strokeWidth="1.2" fill="none" /></SquareExt><ExtBadge>1</ExtBadge></ExtButton>
              <ExtButton aria-label="Baixar" $w={40}><SquareExt bg="#2d8fe0"><path d="M7 2h4v6h3l-5 5-5-5h3zM4 14.500h10v1.300H4z" fill="#fff" /></SquareExt></ExtButton>
              <ExtButton aria-label="Gravar" $w={40}><svg width="16" height="16" viewBox="0 0 16 16"><circle cx="8" cy="8" r="8" fill="#fff" /><circle cx="8" cy="8" r="3.200" fill="#e2331f" /></svg></ExtButton>
              <ExtButton aria-label="Captura" $w={40}><svg width="18" height="18" viewBox="0 0 18 18"><path d="M2 9c1-3 3-4 5-3l5 5c1 2 0 5-3 6-5 1.500-9-3-7-8z" fill="#ff5a0a" /><path d="M8 5l1-3M11 7l3-4M13 10l4-2" stroke="#ff5a0a" strokeWidth="1.6" strokeLinecap="round" /></svg></ExtButton>
              <ExtButton aria-label="Mouse" $w={40}><svg width="14" height="18" viewBox="0 0 14 18"><rect x="1" y="1" width="12" height="16" rx="6" fill="none" stroke="#806065" strokeWidth="2" /><rect x="5.5" y="4" width="3" height="5" rx="1.5" fill="#c9a5a5" /></svg></ExtButton>
              <ExtButton aria-label="Extensões" $w={40}><MdOutlineExtension size={21} /></ExtButton>
              <BarDivider />
              <ExtButton aria-label="Mídia" $w={40}><MdQueueMusic size={21} /></ExtButton>
              <ExtButton aria-label="Perfil" $w={40}><Avatar>L</Avatar></ExtButton>
              <ExtButton aria-label="Mais" $w={40}><MdMoreVert size={21} /></ExtButton>
            </Extensions>
          </AddressRow>

          <Page>
            <SideNav>
              <SideItem aria-label="Meta"><FaMeta size={32} color="#0a6cf0" /></SideItem>
              <BusinessBadge>B</BusinessBadge>
              <SideItem aria-label="Visão geral"><GaugeIcon /></SideItem>
              <SideItem aria-label="Campanhas" $active><GridIcon /></SideItem>
              <SideItem aria-label="Relatórios"><PagesIcon /></SideItem>
              <SideItem aria-label="Públicos"><PeopleIcon /></SideItem>
              <SideItem aria-label="Cobrança"><CoinsIcon /></SideItem>
              <SideItem aria-label="Configurações de anúncios"><MegaphoneIcon /></SideItem>
              <SideItem aria-label="Todas as ferramentas"><MenuIcon /></SideItem>
              <SideRule />
              <HelpButton aria-label="Ajuda"><QuestionIcon /></HelpButton>
              <SideItem $small aria-label="Notícias"><NewsIcon /></SideItem>
              <SideItem $small aria-label="Configurações"><GearIcon /></SideItem>
              <SideItem $small aria-label="Notificações"><BellIcon /><CountBadge>17</CountBadge></SideItem>
              <SideItem $small aria-label="Pesquisar"><SearchIcon /></SideItem>
              <SideItem $small aria-label="Relatar problema"><BugIcon /></SideItem>
            </SideNav>

            <Content>
              <PageHeader>
                <Title>Conjuntos de anúncios</Title>
                <AccountPicker>
                  <AccountSelect aria-label="Conta de anúncios"><option>CONTA 01 (393487023631983)</option></AccountSelect>
                  <Caret />
                </AccountPicker>
                <Spacer />
                <Updated>Atualizado agora mesmo</Updated>
                <Button $bg="#e6e6e6" aria-label="Atualizar"><SyncIcon /></Button>
                <Button $bg="#d7d7d7" $fg="#8b8b8b" $pad={16}>Descartar rascunhos</Button>
                <Button $bg="#d7d7d7" $fg="#8b8b8b" $pad={16}>Conferir e publicar</Button>
                <Button $bg="#e6e6e6" aria-label="Mais opções"><svg width="16" height="4" viewBox="0 0 16 4" fill="currentColor"><circle cx="2" cy="2" r="1.8" /><circle cx="8" cy="2" r="1.8" /><circle cx="14" cy="2" r="1.8" /></svg></Button>
              </PageHeader>
              <SearchRow>
                <SearchInput aria-label="Pesquisar e filtrar" placeholder="Pesquisar e filtrar" />
                <Button $bg="#e6e6e6" $pad={13} $gap={13}>Máximo: 12 de mar de 2024 a 17 de set de 2024<Caret /></Button>
              </SearchRow>
              <LevelTabs>
                <LevelTab><LevelButton><FolderIcon />Campanhas</LevelButton></LevelTab>
                <LevelTab $active>
                  <LevelButton><SetsIcon />Conjuntos de anúncios</LevelButton>
                  <SelectedPill>1 selecionado<Cross /></SelectedPill>
                </LevelTab>
                <LevelTab><LevelButton><AdIcon />Anúncios para 1 Conjunto de anúncios</LevelButton></LevelTab>
              </LevelTabs>
              <Panel>
                <Toolbar>
                  <Button $bg="#5fc00c" $fg="#fff" $strong $pad={16} $gap={11}><PlusIcon />Criar</Button>
                  <ButtonGroup>
                    <Button $pad={14}><CopyIcon />Duplicar</Button>
                    <Button aria-label="Opções de duplicar"><Caret /></Button>
                  </ButtonGroup>
                  <ButtonGroup>
                    <Button $pad={14}><MdModeEdit size={19} />Editar</Button>
                    <Button aria-label="Opções de editar"><Caret /></Button>
                  </ButtonGroup>
                  <Flask aria-label="Teste A/B"><FlaskIcon /></Flask>
                  <Button $bg="#e4e4e4" $fg="#8b8b8b" aria-label="Colar"><ClipboardIcon /></Button>
                  <ButtonGroup $gap={3}>
                    <Button $bg="#e4e4e4" $fg="#8b8b8b" aria-label="Desfazer"><UndoIcon /></Button>
                    <Button aria-label="Excluir"><TrashIcon /></Button>
                    <Button aria-label="Público"><AudienceIcon /></Button>
                    <Button $pad={14} $fg="#555" aria-label="Comparar"><CompareIcon /></Button>
                  </ButtonGroup>
                  <Button $pad={17} $gap={13}>Regras<Caret /></Button>
                  <Spacer />
                  <ConfigLabel>Ver configuração<Switch /></ConfigLabel>
                  <Button $pad={13} $gap={16} aria-label="Colunas"><ColumnsIcon /><Caret /></Button>
                  <Button $pad={14} $gap={15} aria-label="Detalhamento"><BreakdownIcon /><Caret /></Button>
                  <Button $pad={13} $gap={15} aria-label="Relatórios"><ReportIcon /><Caret /></Button>
                  <Button $pad={15} $gap={15} aria-label="Exportar"><ExportIcon /><Caret /></Button>
                </Toolbar>
                <TableArea>
                  <Table>
                    <colgroup>{WIDTHS.map((w, i) => <col key={i} width={w} />)}</colgroup>
                    <thead>
                      <tr>
                        <HeadCell $center scope="col"><Tick aria-label="Selecionar todos" /></HeadCell>
                        <HeadCell scope="col"><HeadText $max="56px">Desativado</HeadText></HeadCell>
                        <Header label="Conjunto de anúncios" />
                        <Header label="Veiculação" sorted />
                        <Header label="Orçamento" />
                        <Header label="Valor usado" />
                        <Header label="CTR único (taxa de cliques no link)" max="116px" />
                        <Header label="Compras" />
                        <Header label="Custo por compra" max="90px" />
                      </tr>
                    </thead>
                    <tbody>{ROWS.map((r, i) => <AdSetRow key={i} row={r} index={i} />)}</tbody>
                    <tfoot>
                      <tr>
                        <FootCell colSpan={2} />
                        <FootCell $name><FootTitle>Resultados de 12 conjuntos de anúncios<FaInfoCircle size={13} /></FootTitle><Sub>Não inclui itens excluídos</Sub></FootCell>
                        <FootCell colSpan={2} />
                        <FootCell $right>R$ 54,96<Sub>Total usado</Sub></FootCell>
                        <FootCell $right>1,38%<Sub>Por conta na Central d...</Sub></FootCell>
                        <FootCell $right><Noted>2</Noted><Sub $inset={16}>Total</Sub></FootCell>
                        <FootCell $right><Noted>R$ 27,48</Noted><Sub>Por compra</Sub></FootCell>
                      </tr>
                    </tfoot>
                  </Table>
                  <VerticalThumb />
                </TableArea>
                <ScrollTrack><HorizontalThumb /></ScrollTrack>
              </Panel>
            </Content>

            <Rail>
              <RailButton aria-label="Gráficos"><BarsIcon /></RailButton>
              <RailButton aria-label="Editar"><MdModeEdit size={21} /></RailButton>
              <RailButton aria-label="Histórico"><ClockIcon /></RailButton>
            </Rail>
          </Page>
        </BrowserWindow>

        <DockArea>
          <DockShelf>
            <DockApp aria-label="Finder" $running><DockTile><FinderArt /></DockTile></DockApp>
            <DockApp aria-label="Launchpad"><DockTile $bg="linear-gradient(#b9bcc4, #a5a8b0)"><LaunchArt /></DockTile></DockApp>
            <DockApp aria-label="Chrome" $running><DockTile $bg="#f6f6f6"><ChromeArt /></DockTile></DockApp>
            <DockApp aria-label="WhatsApp" $running><DockTile $bg="linear-gradient(#5df777, #1fc436)"><FaWhatsapp size={41} /></DockTile></DockApp>
            <DockApp aria-label="Mail"><DockTile $bg="linear-gradient(#1d6ff2, #1bc0fb)"><MailArt /></DockTile></DockApp>
            <DockApp aria-label="Calculadora"><DockTile $bg="#c9cac9"><CalcArt /></DockTile></DockApp>
            <DockApp aria-label="Notas"><DockTile><NotesArt /></DockTile></DockApp>
            <DockApp aria-label="Ajustes"><DockTile $bg="linear-gradient(#c6cfd8, #8f9397)"><SettingsArt /></DockTile><DockBadge>1</DockBadge></DockApp>
            <DockApp><DockTile $bg="linear-gradient(160deg, #07c4c9 20%, #3b7fe6 55%, #7d2ae8 85%)"><CanvaWord>Canva</CanvaWord></DockTile></DockApp>
            <DockApp aria-label="CapCut"><DockTile $bg="#fff"><CapArt /></DockTile></DockApp>
            <DockRule />
            <IconButton aria-label="Downloads" $w={55} $h={47}><DownloadsArt /></IconButton>
            <IconButton aria-label="Lixo" $w={43} $h={50}><TrashArt /></IconButton>
          </DockShelf>
        </DockArea>
      </Desktop>
    </>
  );
}
